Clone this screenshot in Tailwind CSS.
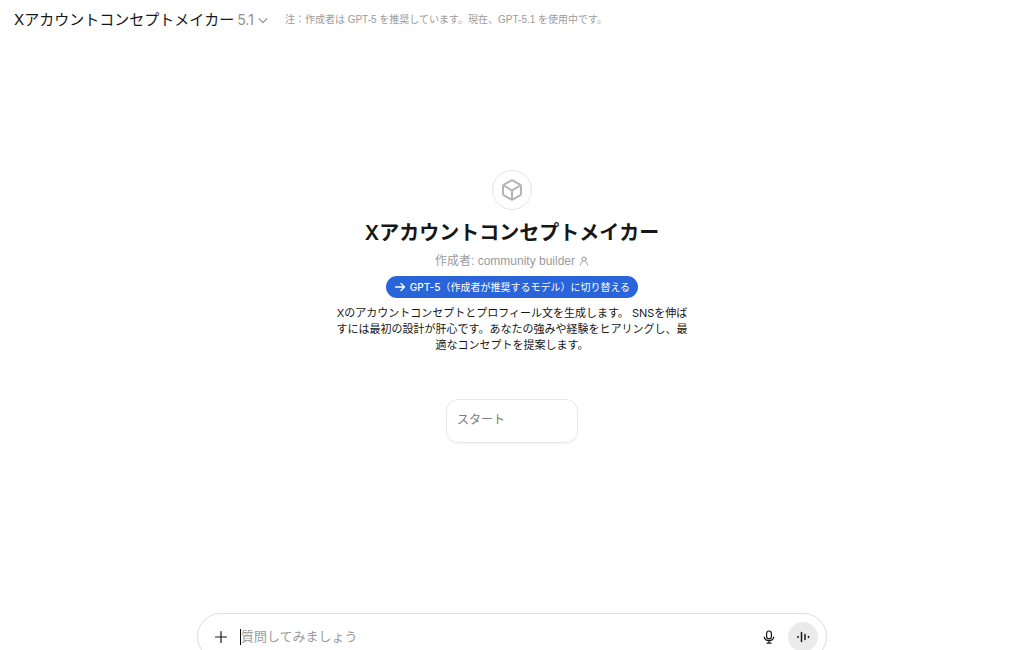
<!DOCTYPE html>
<html lang="ja">
<head>
<meta charset="utf-8">
<meta name="viewport" content="width=device-width, initial-scale=1">
<title>Xアカウントコンセプトメイカー</title>
<script src="https://cdn.jsdelivr.net/npm/@tailwindcss/browser@4"></script>
</head>
<body class="flex h-screen flex-col overflow-hidden bg-white font-[Inter,'Noto_Sans_CJK_JP',sans-serif] text-[#171717]">
  <header class="flex h-10 shrink-0 items-center gap-4 px-3.5">
    <button type="button" class="flex items-center gap-[3px] text-[15px] leading-5">
      <span>Xアカウントコンセプトメイカー</span>
      <span class="text-sm leading-5 text-[#8f8f8f]">5.1</span>
      <svg class="size-3 text-[#8f8f8f]" viewBox="0 0 12 12" fill="none" stroke="currentColor" stroke-width="1.2" stroke-linecap="round" stroke-linejoin="round" aria-hidden="true"><path d="M2 4.700 6 8.700 10 4.700"/></svg>
    </button>
    <p class="font-['Liberation_Sans','Noto_Sans_CJK_JP',sans-serif] text-[10px] leading-[18px] text-[#9b9b9b]">注：作成者は GPT-5 を推奨しています。現在、GPT-5.1 を使用中です。</p>
  </header>

  <main class="flex min-h-0 flex-1 flex-col items-center pt-[130px]">
    <div class="flex size-10 items-center justify-center rounded-full border border-[#e3e3e3] text-[#b4b4b4]">
      <svg class="size-6" viewBox="0 0 24 24" fill="none" stroke="currentColor" stroke-width="2" stroke-linecap="round" stroke-linejoin="round" aria-hidden="true"><path d="M11 2.600a2 2 0 0 1 2 0l7 4a2 2 0 0 1 1 1.700v7.400a2 2 0 0 1-1 1.700l-7 4a2 2 0 0 1-2 0l-7-4a2 2 0 0 1-1-1.700V8.300a2 2 0 0 1 1-1.700zM3.500 7.500 12 12.300l8.500-4.800M12 12.300v9"/></svg>
    </div>
    <h1 class="mt-[9px] text-xl leading-7 font-semibold">Xアカウントコンセプトメイカー</h1>
    <p class="mt-1 flex items-center gap-1 font-['Liberation_Sans','Noto_Sans_CJK_JP',sans-serif] text-[12px] leading-5 text-[#9b9b9b]">
      <span>作成者: community builder</span>
      <svg class="size-2.5" viewBox="0 0 10 10" fill="none" stroke="currentColor" stroke-width="1" stroke-linecap="round" aria-hidden="true"><circle cx="5" cy="3" r="2.100"/><path d="M1.300 9c.3-1.600 1.300-2.700 2.500-3.600M8.700 9c-.3-1.600-1.300-2.700-2.500-3.600"/></svg>
    </p>
    <button type="button" class="mt-[5px] flex h-[22px] items-center gap-1 rounded-full bg-[#2964d9] px-2 font-['Liberation_Sans','Noto_Sans_CJK_JP',sans-serif] text-[10px] leading-4 text-white">
      <svg class="size-3" viewBox="0 0 12 12" fill="none" stroke="currentColor" stroke-width="1.300" stroke-linecap="round" stroke-linejoin="round" aria-hidden="true"><path d="M1.500 6h9M7 2.500 10.500 6 7 9.500"/></svg>
      <span><span class="font-[Inter] font-medium">GPT-5</span>（作成者が推奨するモデル）に切り替える</span>
    </button>
    <p class="mt-[7px] text-center text-[11px] leading-4">Xのアカウントコンセプトとプロフィール文を生成します。 SNSを伸ば<br>すには最初の設計が肝心です。あなたの強みや経験をヒアリングし、最<br>適なコンセプトを提案します。</p>
    <button type="button" class="mt-[46px] w-[132px] rounded-xl border border-[#e8e8ec] px-2.5 pt-2.5 pb-3 text-left text-[12px] leading-5 text-[#7d7d7d] shadow-xs">スタート</button>
  </main>

  <footer class="h-[37px] w-full max-w-[630px] shrink-0 self-center">
    <form class="flex h-[47px] items-center rounded-full border border-[#dfdfdf] bg-white pr-2 pl-4 shadow-xs">
      <button type="button" aria-label="追加" class="mr-3">
        <svg class="size-3.5" viewBox="0 0 14 14" fill="none" stroke="currentColor" stroke-width="1.200" stroke-linecap="round" aria-hidden="true"><path d="M7 1.500v11M1.500 7h11"/></svg>
      </button>
      <span class="h-4 w-px bg-[#0d0d0d]" aria-hidden="true"></span>
      <input type="text" aria-label="質問してみましょう" placeholder="質問してみましょう" class="h-6 min-w-0 flex-1 pb-0.5 text-[13px] placeholder:text-[#9b9b9b] outline-none">
      <button type="button" aria-label="音声入力" class="mr-3">
        <svg class="size-3.5" viewBox="0 0 14 14" fill="none" stroke="currentColor" stroke-width="1.200" stroke-linecap="round" aria-hidden="true"><rect x="4.600" y="1" width="4.800" height="7.800" rx="2.400"/><path d="M2.300 7.200a4.750 4.100 0 0 0 9.400 0M7 10.800v2.200M5 13.200h4"/></svg>
      </button>
      <button type="button" aria-label="音声モード" class="flex size-[30px] items-center justify-center rounded-full bg-[#ebebeb]">
        <svg class="size-3.5" viewBox="0 0 14 14" fill="none" stroke="currentColor" stroke-width="1.500" stroke-linecap="round" aria-hidden="true"><path d="M2 6.400v1.200M5.500 2.500v9M9 4.500v5M12.500 6.400v1.200"/></svg>
      </button>
    </form>
  </footer>
</body>
</html>
